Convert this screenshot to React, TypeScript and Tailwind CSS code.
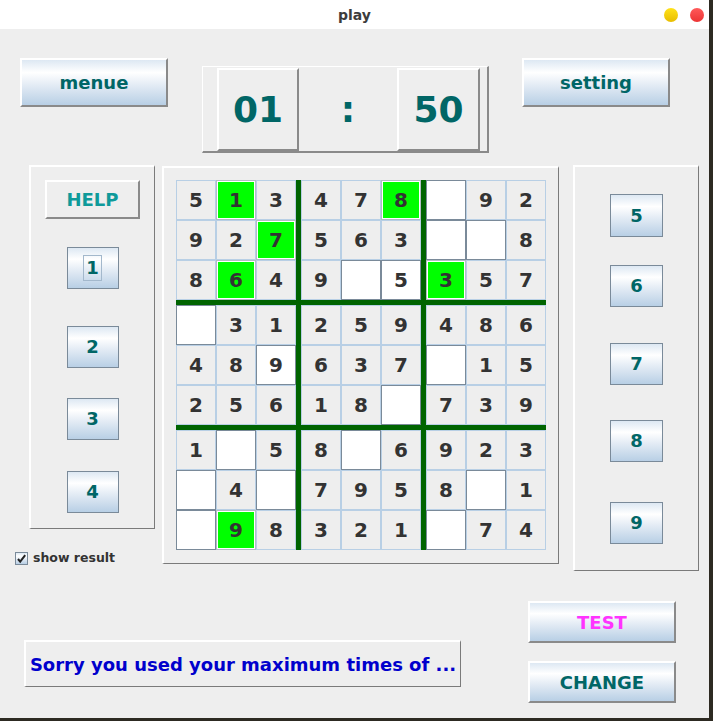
import React from "react";

const grad =
  "bg-[linear-gradient(to_bottom,#dde8f3_0%,#ffffff_28%,#e4ecf5_55%,#b8cfe5_100%)]";
const raised =
  "border-t-2 border-l-2 border-t-white border-l-white border-b-2 border-r-2 border-b-[#8a8a8a] border-r-[#8a8a8a]";
const etched =
  "border-t-2 border-l-2 border-t-white border-l-white border-b-[1.5px] border-r-[1.5px] border-b-[#7a7a7a] border-r-[#7a7a7a]";

const rows: string[][] = [
  ["5", "g1", "3", "4", "7", "g8", "w", "9", "2"],
  ["9", "2", "g7", "5", "6", "3", "w", "w", "8"],
  ["8", "g6", "4", "9", "w", "w5", "g3", "5", "7"],
  ["w", "3", "1", "2", "5", "9", "4", "8", "6"],
  ["4", "8", "w9", "6", "3", "7", "w", "1", "5"],
  ["2", "5", "6", "1", "8", "w", "7", "3", "9"],
  ["1", "w", "5", "8", "w", "6", "9", "2", "3"],
  ["w", "4", "w", "7", "9", "5", "8", "w", "1"],
  ["w", "g9", "8", "3", "2", "1", "w", "7", "4"],
];

function Cell({ v }: { v: string }) {
  const t = v[0] === "g" ? "g" : v[0] === "w" ? "w" : "n";
  const d = t === "n" ? v : v.slice(1);
  const base =
    "w-[40px] h-[40px] flex items-center justify-center text-[20px] font-bold text-[#333333] leading-none";
  const cls =
    t === "n"
      ? "border border-[#b8cfe5] bg-[#eeeeee]"
      : t === "w"
      ? "border border-[#7a8a99] bg-white"
      : "border border-[#b4bcc4] bg-[#00ff00] shadow-[inset_0_0_0_1px_#ffffff]";
  return <div className={`${base} ${cls}`}>{d}</div>;
}

function Block({ br, bc }: { br: number; bc: number }) {
  const cells: string[] = [];
  for (let r = 0; r < 3; r++)
    for (let c = 0; c < 3; c++) cells.push(rows[br * 3 + r][bc * 3 + c]);
  return (
    <div className="grid grid-cols-3">
      {cells.map((v, i) => (
        <Cell key={i} v={v} />
      ))}
    </div>
  );
}

function NumBtn({
  n,
  w,
  h,
  mt,
  focus,
}: {
  n: string;
  w: string;
  h: string;
  mt: string;
  focus?: boolean;
}) {
  return (
    <div
      className={`${w} ${h} ${mt} ${grad} border border-[#7a8a99] flex items-center justify-center text-[18px] font-bold text-[#006666] leading-none`}
    >
      {focus ? (
        <span className="border border-[#a3b8cc] px-[2px] py-[3px]">{n}</span>
      ) : (
        n
      )}
    </div>
  );
}

export default function App() {
  return (
    <div className="w-[713px] h-[721px] bg-[#2d2a22] font-['DejaVu_Sans','Liberation_Sans',sans-serif]">
      <div className="w-[709px] h-[718px] bg-[#eeeeee] flex flex-col">
        {/* title bar */}
        <div className="h-[29px] bg-white grid grid-cols-[1fr_auto_1fr] items-center">
          <div />
          <div className="text-[14px] font-bold text-[#3c3c3c] leading-none">play</div>
          <div className="flex justify-end gap-[12px] pr-[5px]">
            <div className="w-[14px] h-[14px] rounded-full bg-[linear-gradient(to_bottom,#ffe21a,#e8bd00)]" />
            <div className="w-[14px] h-[14px] rounded-full bg-[linear-gradient(to_bottom,#ff5a5a,#ec3434)]" />
          </div>
        </div>

        {/* top row */}
        <div className="flex items-start pt-[29px] pl-[20px]">
          <div
            className={`w-[148px] h-[49px] ${grad} ${raised} flex items-center justify-center text-[18px] font-bold text-[#006666]`}
          >
            menue
          </div>
          <div className="ml-[34px] mt-[8px] w-[287px] h-[87px] border-t border-l border-t-white border-l-white border-b-2 border-r-2 border-b-[#8a8a8a] border-r-[#8a8a8a] flex items-start pl-[14px] pt-[1px]">
            <div
              className={`w-[82px] h-[83px] ${raised} flex items-center justify-center text-[36px] font-bold text-[#006666] leading-none`}
            >
              01
            </div>
            <div className="w-[98px] h-[83px] flex items-center justify-center text-[36px] font-bold text-[#006666] leading-none">
              :
            </div>
            <div
              className={`w-[83px] h-[83px] ${raised} flex items-center justify-center text-[36px] font-bold text-[#006666] leading-none`}
            >
              50
            </div>
          </div>
          <div
            className={`ml-[33px] w-[148px] h-[49px] ${grad} ${raised} flex items-center justify-center text-[18px] font-bold text-[#006666]`}
          >
            setting
          </div>
        </div>

        {/* middle row */}
        <div className="flex items-start mt-[12px]">
          <div className="ml-[15px] flex flex-col">
            <div
              className={`ml-[14px] w-[126px] h-[364px] ${etched} flex flex-col items-center`}
            >
              <div
                className={`mt-[13px] w-[95px] h-[39px] ${raised} bg-[#eeeeee] flex items-center justify-center text-[18px] font-bold text-[#0f9a9a] leading-none`}
              >
                HELP
              </div>
              <NumBtn n="1" w="w-[52px]" h="h-[42px]" mt="mt-[28px]" focus />
              <NumBtn n="2" w="w-[52px]" h="h-[42px]" mt="mt-[37px]" />
              <NumBtn n="3" w="w-[52px]" h="h-[42px]" mt="mt-[30px]" />
              <NumBtn n="4" w="w-[52px]" h="h-[42px]" mt="mt-[31px]" />
            </div>
            <div className="mt-[23px] flex items-center gap-[5px]">
              <div
                className={`w-[13px] h-[13px] border border-[#7a8a99] ${grad} flex items-center justify-center`}
              >
                <svg width="11" height="11" viewBox="0 0 11 11">
                  <path
                    d="M2 6 L4.2 8.6 L9.2 2.2"
                    fill="none"
                    stroke="#222222"
                    strokeWidth="2"
                  />
                </svg>
              </div>
              <span className="text-[12.5px] font-bold text-[#333333] leading-none">
                show result
              </span>
            </div>
          </div>

          <div
            className={`ml-[7px] mt-[1px] w-[397px] h-[398px] ${etched} pl-[12px] pt-[12px]`}
          >
            <div className="grid grid-cols-3 gap-[5px] bg-[#006400] w-fit">
              {[0, 1, 2].map((br) =>
                [0, 1, 2].map((bc) => <Block key={`${br}-${bc}`} br={br} bc={bc} />)
              )}
            </div>
          </div>

          <div
            className={`ml-[14px] w-[126px] h-[406px] ${etched} flex flex-col items-center`}
          >
            <NumBtn n="5" w="w-[53px]" h="h-[43px]" mt="mt-[27px]" />
            <NumBtn n="6" w="w-[53px]" h="h-[42px]" mt="mt-[28px]" />
            <NumBtn n="7" w="w-[53px]" h="h-[42px]" mt="mt-[36px]" />
            <NumBtn n="8" w="w-[53px]" h="h-[42px]" mt="mt-[35px]" />
            <NumBtn n="9" w="w-[53px]" h="h-[42px]" mt="mt-[40px]" />
          </div>
        </div>

        {/* bottom row */}
        <div className="flex items-start mt-[30px]">
          <div
            className={`ml-[24px] mt-[39px] w-[437px] h-[47px] border-t-2 border-l-2 border-t-white border-l-white border-b border-r border-b-[#7a7a7a] border-r-[#7a7a7a] flex items-center justify-center text-[18px] font-bold text-[#0000cc] whitespace-nowrap`}
          >
            Sorry you used your maximum times of ...
          </div>
          <div className="ml-[67px] flex flex-col">
            <div
              className={`w-[148px] h-[42px] ${grad} ${raised} flex items-center justify-center text-[18px] font-bold text-[#ff33ff]`}
            >
              TEST
            </div>
            <div
              className={`mt-[18px] w-[148px] h-[42px] ${grad} ${raised} flex items-center justify-center text-[18px] font-bold text-[#006666]`}
            >
              CHANGE
            </div>
          </div>
        </div>
      </div>
    </div>
  );
}
